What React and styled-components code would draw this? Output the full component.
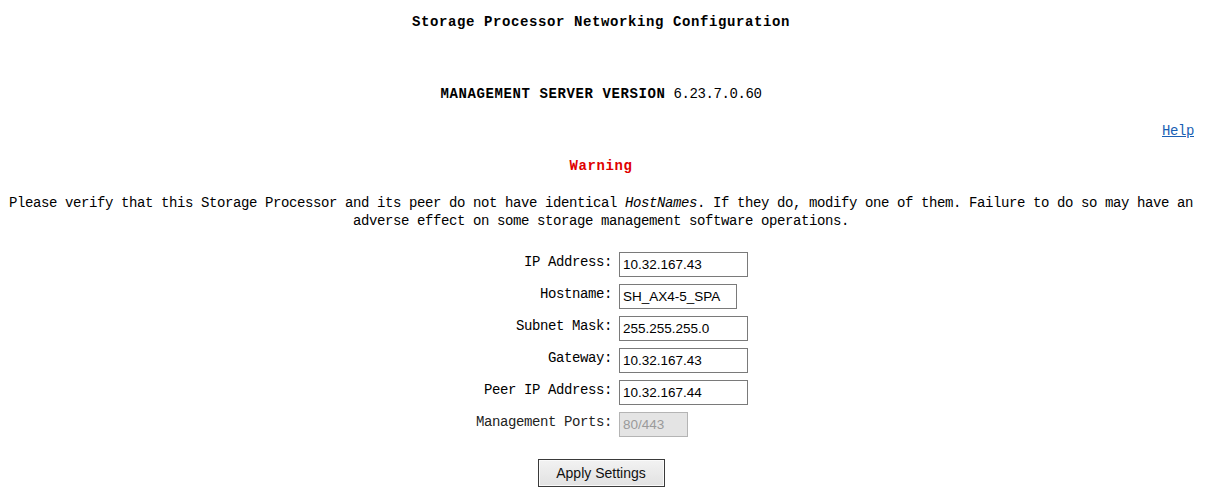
import React from "react";
import styled, { createGlobalStyle } from "styled-components";

const Global = createGlobalStyle`
  body {
    margin: 8px 20px 8px 8px;
    background: #ffffff;
    color: #000000;
    font-family: "Liberation Mono", "DejaVu Sans Mono", monospace;
    font-size: 14px;
    letter-spacing: -0.4px;
  }
`;

const Page = styled.div`
  display: flex;
  flex-direction: column;
`;

const Title = styled.div`
  text-align: center;
  font-weight: bold;
  letter-spacing: 0.6px;
  line-height: 18px;
  margin-top: 5px;
`;

const Version = styled.div`
  text-align: center;
  line-height: 18px;
  margin-top: 54px;
`;

const Strong = styled.span`
  font-weight: bold;
  letter-spacing: 0.6px;
`;

const HelpRow = styled.div`
  text-align: right;
  line-height: 18px;
  margin-top: 19px;
`;

const HelpLink = styled.a`
  color: #1a5fb4;
  text-decoration: underline;
`;

const Warning = styled.div`
  text-align: center;
  color: #e00000;
  font-weight: bold;
  letter-spacing: 0.6px;
  line-height: 18px;
  margin-top: 17px;
`;

const Message = styled.p`
  text-align: center;
  line-height: 18px;
  margin: 19px 0 0;
`;

const Emph = styled.i`
  font-style: italic;
`;

const Form = styled.div`
  display: grid;
  grid-template-columns: 158px 129px;
  column-gap: 7px;
  justify-content: center;
  grid-auto-rows: 32px;
  margin-top: 18px;
`;

const Label = styled.label`
  text-align: right;
  align-self: center;
  line-height: 18px;
  margin-top: -4px;
  color: ${(p) => (p.$dim ? "#222" : "#000")};
`;

const Field = styled.input`
  align-self: center;
  box-sizing: border-box;
  width: ${(p) => p.$w || 129}px;
  height: 25px;
  margin: 0;
  padding: 1px 3px 0;
  border: 1px solid ${(p) => (p.disabled ? "#b4b4b4" : "#7a7a7a")};
  background: ${(p) => (p.disabled ? "#e4e4e4" : "#ffffff")};
  color: ${(p) => (p.disabled ? "#9a9a9a" : "#000000")};
  font-family: "Liberation Sans", Arial, sans-serif;
  font-size: 13.5px;
  letter-spacing: 0;
  outline: none;
`;

const ButtonRow = styled.div`
  display: flex;
  justify-content: center;
  margin-top: 19px;
`;

const Button = styled.button`
  box-sizing: border-box;
  width: 127px;
  height: 28px;
  margin: 0;
  border: 1px solid #3a3a3a;
  background: linear-gradient(#f2f2f2, #e2e2e2);
  box-shadow: inset 0 0 0 1px #fafafa;
  font-family: "Liberation Sans", Arial, sans-serif;
  font-size: 14px;
  letter-spacing: 0;
  color: #111;
  padding: 0;
`;

const fields = [
  { label: "IP Address:", value: "10.32.167.43" },
  { label: "Hostname:", value: "SH_AX4-5_SPA", w: 118 },
  { label: "Subnet Mask:", value: "255.255.255.0" },
  { label: "Gateway:", value: "10.32.167.43" },
  { label: "Peer IP Address:", value: "10.32.167.44" },
  { label: "Management Ports:", value: "80/443", w: 69, disabled: true },
];

export default function App() {
  return (
    <>
      <Global />
      <Page>
        <Title>Storage Processor Networking Configuration</Title>
        <Version>
          <Strong>MANAGEMENT SERVER VERSION</Strong> 6.23.7.0.60
        </Version>
        <HelpRow>
          <HelpLink href="#">Help</HelpLink>
        </HelpRow>
        <Warning>Warning</Warning>
        <Message>
          Please verify that this Storage Processor and its peer do not have identical{" "}
          <Emph>HostNames</Emph>. If they do, modify one of them. Failure to do so may have an
          adverse effect on some storage management software operations.
        </Message>
        <Form>
          {fields.map((f) => (
            <React.Fragment key={f.label}>
              <Label $dim={f.disabled}>{f.label}</Label>
              <Field
                type="text"
                defaultValue={f.value}
                $w={f.w}
                disabled={f.disabled}
                readOnly={!f.disabled}
              />
            </React.Fragment>
          ))}
        </Form>
        <ButtonRow>
          <Button type="button">Apply Settings</Button>
        </ButtonRow>
      </Page>
    </>
  );
}
